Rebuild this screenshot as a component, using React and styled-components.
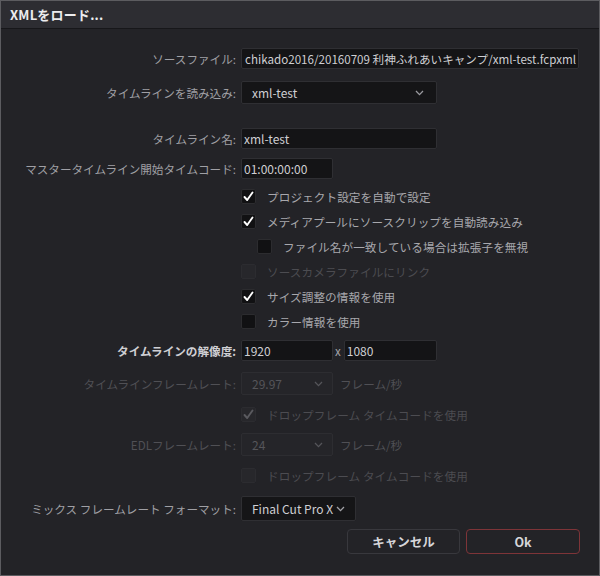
import React from "react";
import styled, { createGlobalStyle } from "styled-components";

const Global = createGlobalStyle`
  html, body { margin: 0; padding: 0; background: #232327; }
  body { font-family: "Noto Sans CJK JP", "Noto Sans", sans-serif; }
  * { box-sizing: border-box; }
`;

const Dialog = styled.div`
  width: 600px;
  height: 576px;
  border: 1px solid #5c5c60;
  background: #232327;
  display: flex;
  flex-direction: column;
  overflow: hidden;
`;

const TitleBar = styled.div`
  height: 28px;
  flex: none;
  background: #2d2d32;
  border-bottom: 1px solid #17171a;
  display: flex;
  align-items: center;
  padding-left: 9px;
  color: #ececee;
  font-weight: 700;
  font-size: 13px;
  letter-spacing: 0.2px;
`;

const Body = styled.div`
  display: flex;
  flex-direction: column;
  padding-top: 19px;
`;

const Row = styled.div`
  display: grid;
  grid-template-columns: 235px 1fr;
  column-gap: 5px;
  align-items: center;
  height: ${(p) => p.$h}px;
  margin-top: ${(p) => p.$mt || 0}px;
`;

const Label = styled.div`
  text-align: right;
  font-size: 11.6px;
  white-space: nowrap;
  color: ${(p) => (p.$strong ? "#cfcfd3" : p.$disabled ? "#505055" : "#a0a0a5")};
  font-weight: ${(p) => (p.$strong ? 700 : 400)};
`;

const Controls = styled.div`
  display: flex;
  align-items: center;
  height: 100%;
  padding-left: ${(p) => p.$indent || 0}px;
`;

const Field = styled.div`
  width: ${(p) => p.$w}px;
  height: ${(p) => p.$h || 21}px;
  background: #141416;
  border: 1px solid #2f2f33;
  border-radius: 2px;
  display: flex;
  align-items: center;
  justify-content: ${(p) => (p.$end ? "flex-end" : "flex-start")};
  overflow: hidden;
  padding: 0 2px;
  color: #cfcfd3;
  font-size: ${(p) => p.$fs || 12}px;
  white-space: nowrap;
`;

const Select = styled.div`
  width: ${(p) => p.$w}px;
  height: ${(p) => p.$h}px;
  background: ${(p) => (p.$disabled ? "#252529" : "#151517")};
  border: 1px solid ${(p) => (p.$disabled ? "#2d2d31" : "#2f2f33")};
  border-radius: 2px;
  display: flex;
  align-items: center;
  justify-content: space-between;
  padding: 0 ${(p) => p.$pr}px 0 10px;
  color: ${(p) => (p.$disabled ? "#55555a" : "#cfcfd3")};
  font-size: 12px;
  white-space: nowrap;
`;

const Chevron = ({ color }) => (
  <svg width="9" height="6" viewBox="0 0 9 6">
    <polyline points="1,1 4.5,4.6 8,1" fill="none" stroke={color} strokeWidth="1.3" />
  </svg>
);

const Unit = styled.span`
  font-size: 11.6px;
  color: ${(p) => (p.$disabled ? "#505055" : "#a2a2a7")};
  margin-left: ${(p) => p.$ml}px;
  margin-right: ${(p) => p.$mr || 0}px;
`;

const Box = styled.span`
  width: 15px;
  height: 15px;
  flex: none;
  border-radius: 2px;
  background: ${(p) => (p.$disabled ? "#27272b" : "#111113")};
  border: 1px solid ${(p) => (p.$disabled ? "#2c2c30" : "#2c2c2f")};
  display: flex;
  align-items: center;
  justify-content: center;
`;

const CheckText = styled.span`
  margin-left: 11px;
  font-size: 11.6px;
  letter-spacing: 0.1px;
  color: ${(p) => (p.$disabled ? "#4c4c51" : "#a8a8ad")};
  white-space: nowrap;
`;

const Check = ({ checked, disabled, label, indent }) => (
  <Row $h={25}>
    <span />
    <Controls $indent={indent}>
      <Box $disabled={disabled}>
        {checked && (
          <svg width="11" height="11" viewBox="0 0 11 11">
            <polyline
              points="1.5,6 4.2,9 9.5,1.5"
              fill="none"
              stroke={disabled ? "#5a5a5f" : "#ffffff"}
              strokeWidth="1.9"
              strokeLinecap="round"
              strokeLinejoin="round"
            />
          </svg>
        )}
      </Box>
      <CheckText $disabled={disabled}>{label}</CheckText>
    </Controls>
  </Row>
);

const Spacer = styled.div`
  height: ${(p) => p.$h}px;
  flex: none;
`;

const ButtonRow = styled.div`
  display: flex;
  justify-content: flex-end;
  gap: 6px;
  padding-right: 19px;
  margin-top: 8px;
`;

const Button = styled.div`
  width: ${(p) => p.$w}px;
  height: 25px;
  border-radius: 4px;
  border: 1px solid ${(p) => (p.$primary ? "#7e3438" : "#38383d")};
  background: #232327;
  display: flex;
  align-items: center;
  justify-content: center;
  color: #d6d6da;
  font-size: 12.5px;
  font-weight: 700;
`;

export default function App() {
  return (
    <>
      <Global />
      <Dialog>
        <TitleBar>XMLをロード...</TitleBar>
        <Body>
          <Row $h={21}>
            <Label>ソースファイル:</Label>
            <Controls>
              <Field $w={338} $end $fs={11.6}>
                chikado2016/20160709 利神ふれあいキャンプ/xml-test.fcpxml
              </Field>
            </Controls>
          </Row>
          <Row $h={23} $mt={12}>
            <Label>タイムラインを読み込み:</Label>
            <Controls>
              <Select $w={196} $h={23} $pr={12}>
                <span>xml-test</span>
                <Chevron color="#9a9a9f" />
              </Select>
            </Controls>
          </Row>
          <Row $h={21} $mt={24}>
            <Label>タイムライン名:</Label>
            <Controls>
              <Field $w={196}>xml-test</Field>
            </Controls>
          </Row>
          <Row $h={21} $mt={9}>
            <Label>マスタータイムライン開始タイムコード:</Label>
            <Controls>
              <Field $w={92}>01:00:00:00</Field>
            </Controls>
          </Row>
          <Spacer $h={5} />
          <Check checked label="プロジェクト設定を自動で設定" />
          <Check checked label="メディアプールにソースクリップを自動読み込み" />
          <Check indent={16} label="ファイル名が一致している場合は拡張子を無視" />
          <Check disabled label="ソースカメラファイルにリンク" />
          <Check checked label="サイズ調整の情報を使用" />
          <Check label="カラー情報を使用" />
          <Row $h={21} $mt={6}>
            <Label $strong>タイムラインの解像度:</Label>
            <Controls>
              <Field $w={92}>1920</Field>
              <Unit $ml={2} $mr={3}>x</Unit>
              <Field $w={93}>1080</Field>
            </Controls>
          </Row>
          <Row $h={23} $mt={11}>
            <Label $disabled>タイムラインフレームレート:</Label>
            <Controls>
              <Select $w={92} $h={23} $pr={9} $disabled>
                <span>29.97</span>
                <Chevron color="#55555a" />
              </Select>
              <Unit $disabled $ml={7}>フレーム/秒</Unit>
            </Controls>
          </Row>
          <Spacer $h={7} />
          <Check checked disabled label="ドロップフレーム タイムコードを使用" />
          <Row $h={23} $mt={6}>
            <Label $disabled>EDLフレームレート:</Label>
            <Controls>
              <Select $w={92} $h={23} $pr={9} $disabled>
                <span>24</span>
                <Chevron color="#55555a" />
              </Select>
              <Unit $disabled $ml={7}>フレーム/秒</Unit>
            </Controls>
          </Row>
          <Spacer $h={7} />
          <Check disabled label="ドロップフレーム タイムコードを使用" />
          <Row $h={25} $mt={8}>
            <Label>ミックス フレームレート フォーマット:</Label>
            <Controls>
              <Select $w={115} $h={25} $pr={10}>
                <span>Final Cut Pro X</span>
                <Chevron color="#a2a2a7" />
              </Select>
            </Controls>
          </Row>
          <ButtonRow>
            <Button $w={113}>キャンセル</Button>
            <Button $w={114} $primary>Ok</Button>
          </ButtonRow>
        </Body>
      </Dialog>
    </>
  );
}
